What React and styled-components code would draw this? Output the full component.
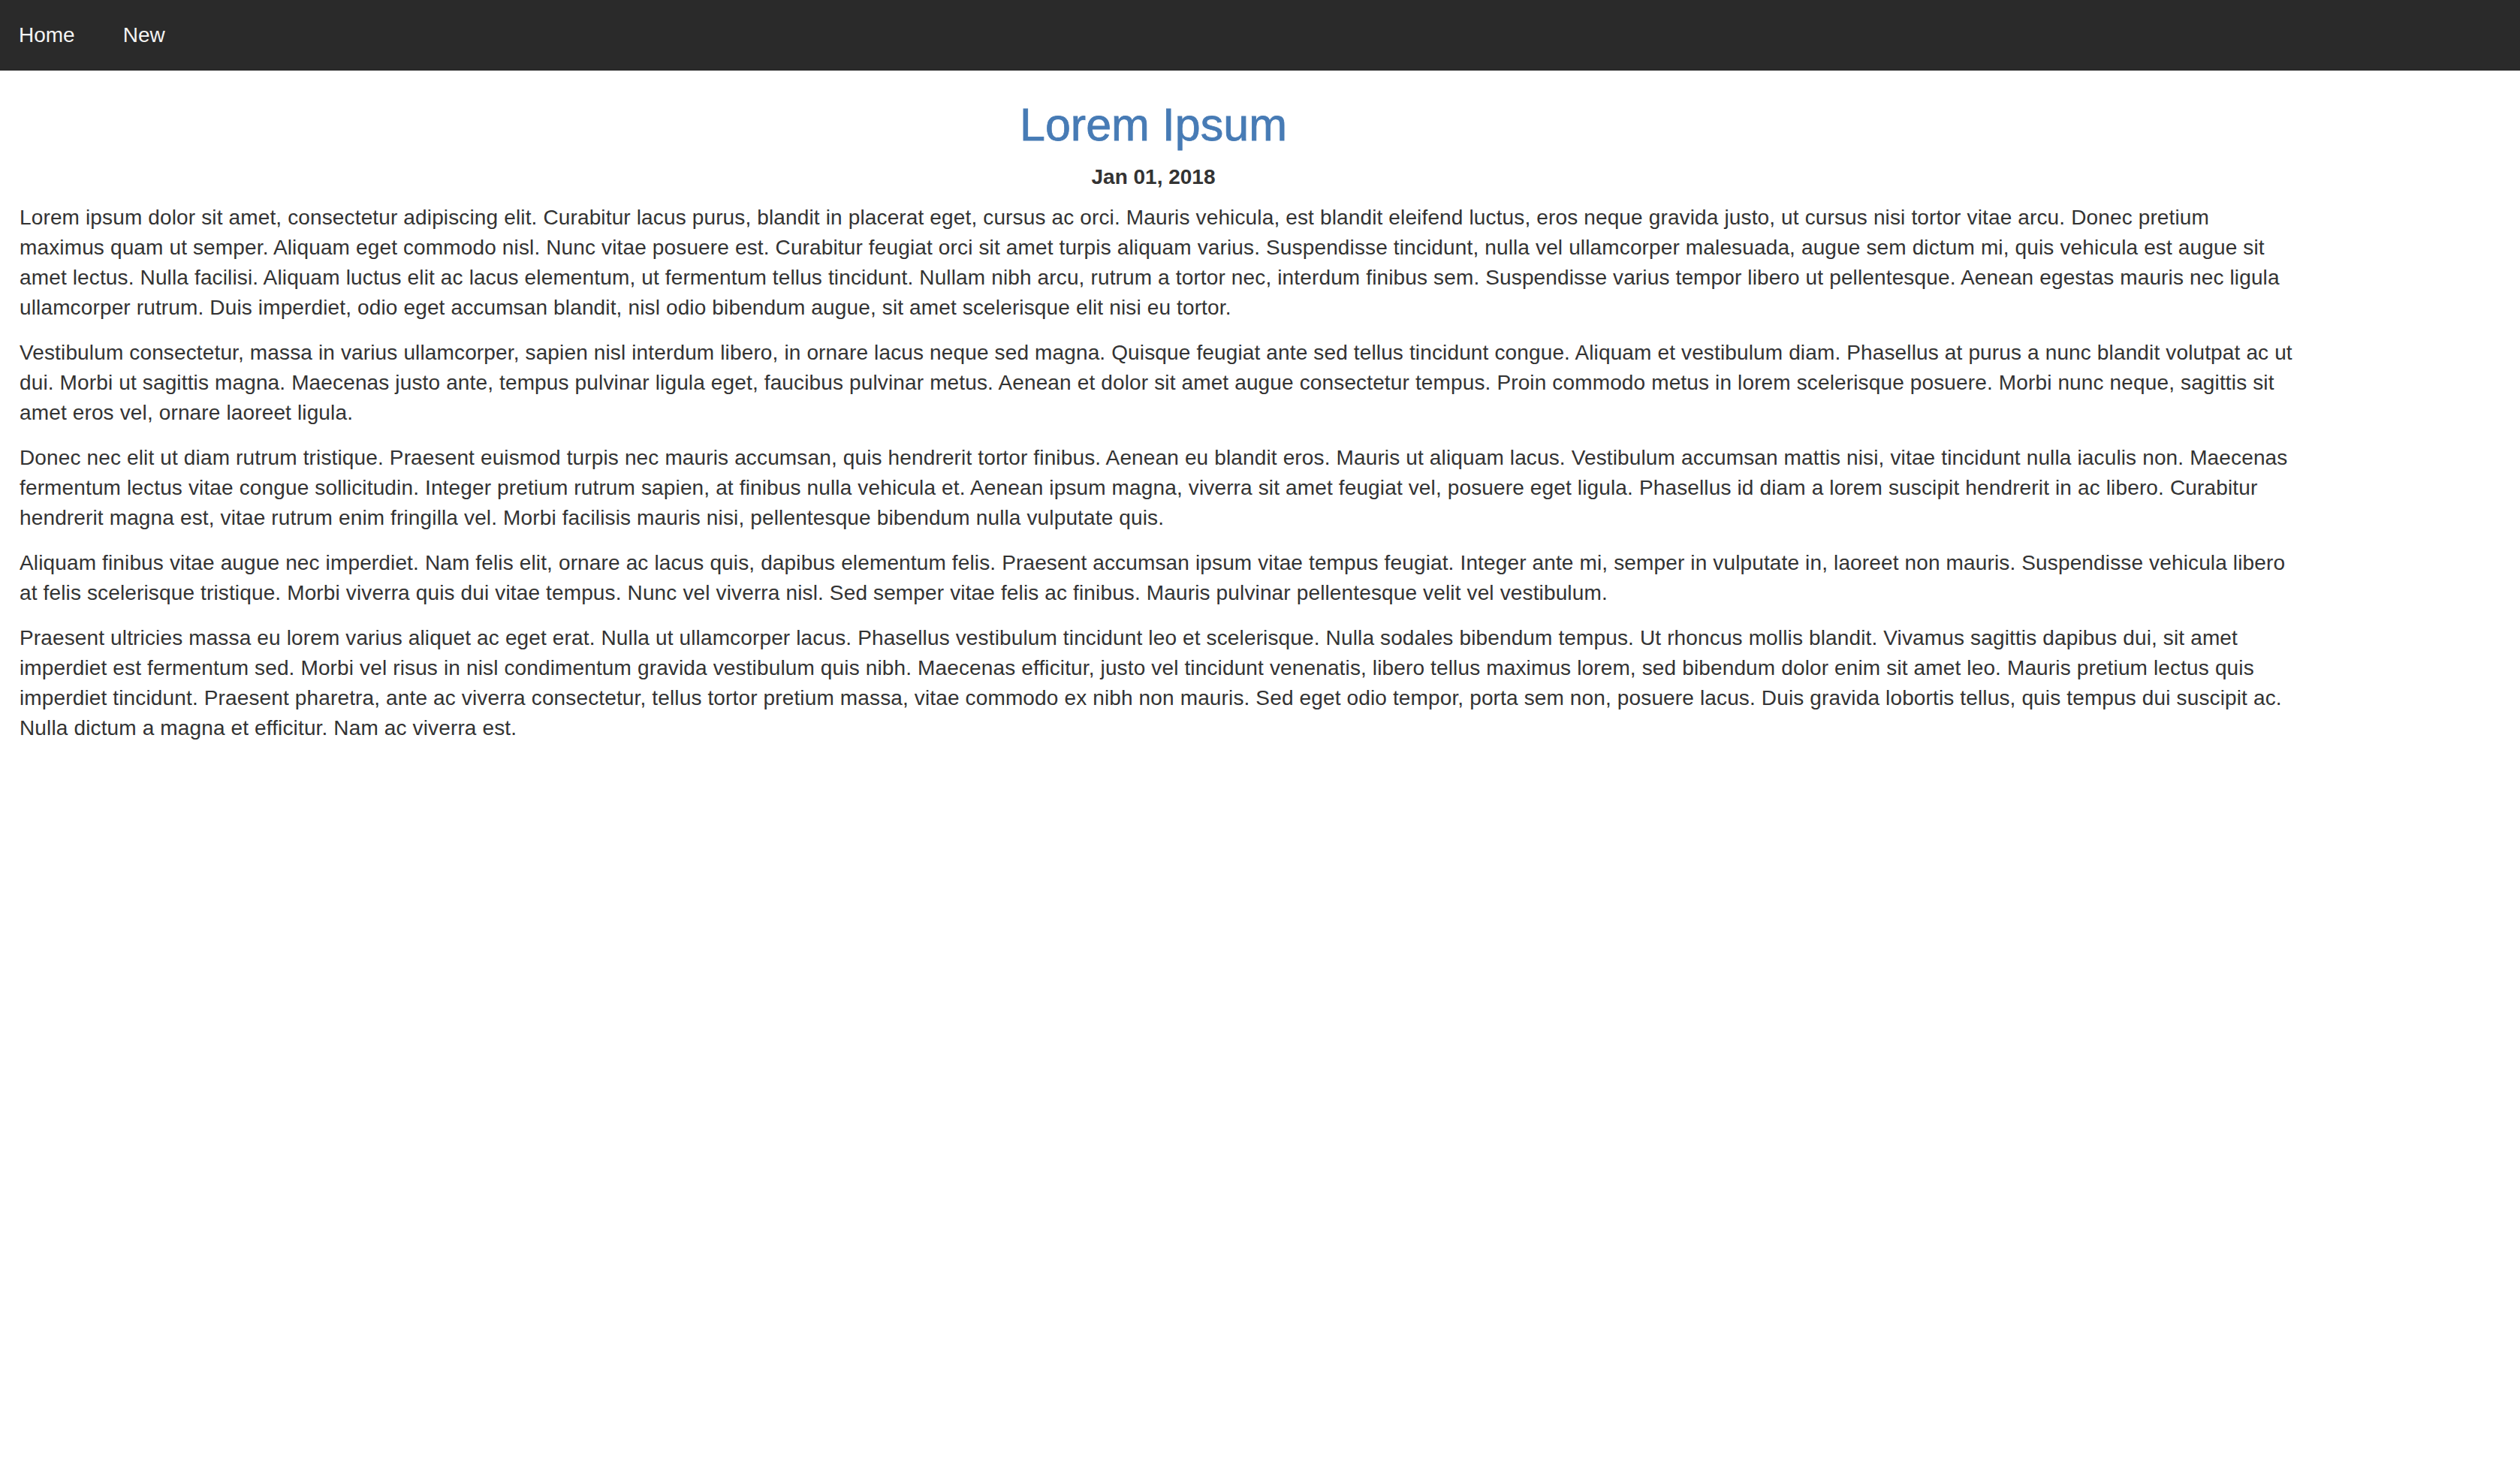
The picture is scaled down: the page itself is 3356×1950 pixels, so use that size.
import React from 'react';
import styled, { createGlobalStyle } from 'styled-components';

const GlobalStyle = createGlobalStyle`
  html, body {
    margin: 0;
    padding: 0;
    background: #fff;
  }

  body {
    font-family: "Liberation Sans", Arial, Helvetica, sans-serif;
    font-size: 28px;
    line-height: 40px;
    color: #333;
  }
`;

const NavBar = styled.nav`
  display: flex;
  align-items: center;
  height: 94px;
  padding: 0 25px;
  gap: 64px;
  background: #2a2a2a;
`;

const NavLink = styled.a`
  color: #f4f4f4;
  font-size: 28px;
  line-height: 40px;
  text-decoration: none;
  cursor: pointer;
`;

const Article = styled.main`
  width: 3020px;
  margin-left: 26px;
  padding-top: 39px;
`;

const Title = styled.h1`
  margin: 0;
  text-align: center;
  font-size: 61px;
  line-height: 67px;
  font-weight: 500;
  color: #477bb5;
  -webkit-text-stroke: 0.8px #477bb5;
`;

const PostDate = styled.div`
  margin: 16px 0 14px;
  text-align: center;
  font-weight: 700;
  color: #333;
`;

const Paragraph = styled.p`
  margin: 0 0 20px;
  letter-spacing: 0.14px;
`;

const Line = styled.span`
  display: block;
  white-space: nowrap;
`;

// line breaks follow the reference rendering
const paragraphs = [
  [
    'Lorem ipsum dolor sit amet, consectetur adipiscing elit. Curabitur lacus purus, blandit in placerat eget, cursus ac orci. Mauris vehicula, est blandit eleifend luctus, eros neque gravida justo, ut cursus nisi tortor vitae arcu. Donec pretium',
    'maximus quam ut semper. Aliquam eget commodo nisl. Nunc vitae posuere est. Curabitur feugiat orci sit amet turpis aliquam varius. Suspendisse tincidunt, nulla vel ullamcorper malesuada, augue sem dictum mi, quis vehicula est augue sit',
    'amet lectus. Nulla facilisi. Aliquam luctus elit ac lacus elementum, ut fermentum tellus tincidunt. Nullam nibh arcu, rutrum a tortor nec, interdum finibus sem. Suspendisse varius tempor libero ut pellentesque. Aenean egestas mauris nec ligula',
    'ullamcorper rutrum. Duis imperdiet, odio eget accumsan blandit, nisl odio bibendum augue, sit amet scelerisque elit nisi eu tortor.',
  ],
  [
    'Vestibulum consectetur, massa in varius ullamcorper, sapien nisl interdum libero, in ornare lacus neque sed magna. Quisque feugiat ante sed tellus tincidunt congue. Aliquam et vestibulum diam. Phasellus at purus a nunc blandit volutpat ac ut',
    'dui. Morbi ut sagittis magna. Maecenas justo ante, tempus pulvinar ligula eget, faucibus pulvinar metus. Aenean et dolor sit amet augue consectetur tempus. Proin commodo metus in lorem scelerisque posuere. Morbi nunc neque, sagittis sit',
    'amet eros vel, ornare laoreet ligula.',
  ],
  [
    'Donec nec elit ut diam rutrum tristique. Praesent euismod turpis nec mauris accumsan, quis hendrerit tortor finibus. Aenean eu blandit eros. Mauris ut aliquam lacus. Vestibulum accumsan mattis nisi, vitae tincidunt nulla iaculis non. Maecenas',
    'fermentum lectus vitae congue sollicitudin. Integer pretium rutrum sapien, at finibus nulla vehicula et. Aenean ipsum magna, viverra sit amet feugiat vel, posuere eget ligula. Phasellus id diam a lorem suscipit hendrerit in ac libero. Curabitur',
    'hendrerit magna est, vitae rutrum enim fringilla vel. Morbi facilisis mauris nisi, pellentesque bibendum nulla vulputate quis.',
  ],
  [
    'Aliquam finibus vitae augue nec imperdiet. Nam felis elit, ornare ac lacus quis, dapibus elementum felis. Praesent accumsan ipsum vitae tempus feugiat. Integer ante mi, semper in vulputate in, laoreet non mauris. Suspendisse vehicula libero',
    'at felis scelerisque tristique. Morbi viverra quis dui vitae tempus. Nunc vel viverra nisl. Sed semper vitae felis ac finibus. Mauris pulvinar pellentesque velit vel vestibulum.',
  ],
  [
    'Praesent ultricies massa eu lorem varius aliquet ac eget erat. Nulla ut ullamcorper lacus. Phasellus vestibulum tincidunt leo et scelerisque. Nulla sodales bibendum tempus. Ut rhoncus mollis blandit. Vivamus sagittis dapibus dui, sit amet',
    'imperdiet est fermentum sed. Morbi vel risus in nisl condimentum gravida vestibulum quis nibh. Maecenas efficitur, justo vel tincidunt venenatis, libero tellus maximus lorem, sed bibendum dolor enim sit amet leo. Mauris pretium lectus quis',
    'imperdiet tincidunt. Praesent pharetra, ante ac viverra consectetur, tellus tortor pretium massa, vitae commodo ex nibh non mauris. Sed eget odio tempor, porta sem non, posuere lacus. Duis gravida lobortis tellus, quis tempus dui suscipit ac.',
    'Nulla dictum a magna et efficitur. Nam ac viverra est.',
  ],
];

const App = () => (
  <>
    <GlobalStyle />
    <NavBar>
      <NavLink>Home</NavLink>
      <NavLink>New</NavLink>
    </NavBar>
    <Article>
      <Title>Lorem Ipsum</Title>
      <PostDate>Jan 01, 2018</PostDate>
      {paragraphs.map((lines) => (
        <Paragraph key={lines[0].slice(0, 20)}>
          {lines.map((line) => (
            <Line key={line}>{line}</Line>
          ))}
        </Paragraph>
      ))}
    </Article>
  </>
);

export default App;
